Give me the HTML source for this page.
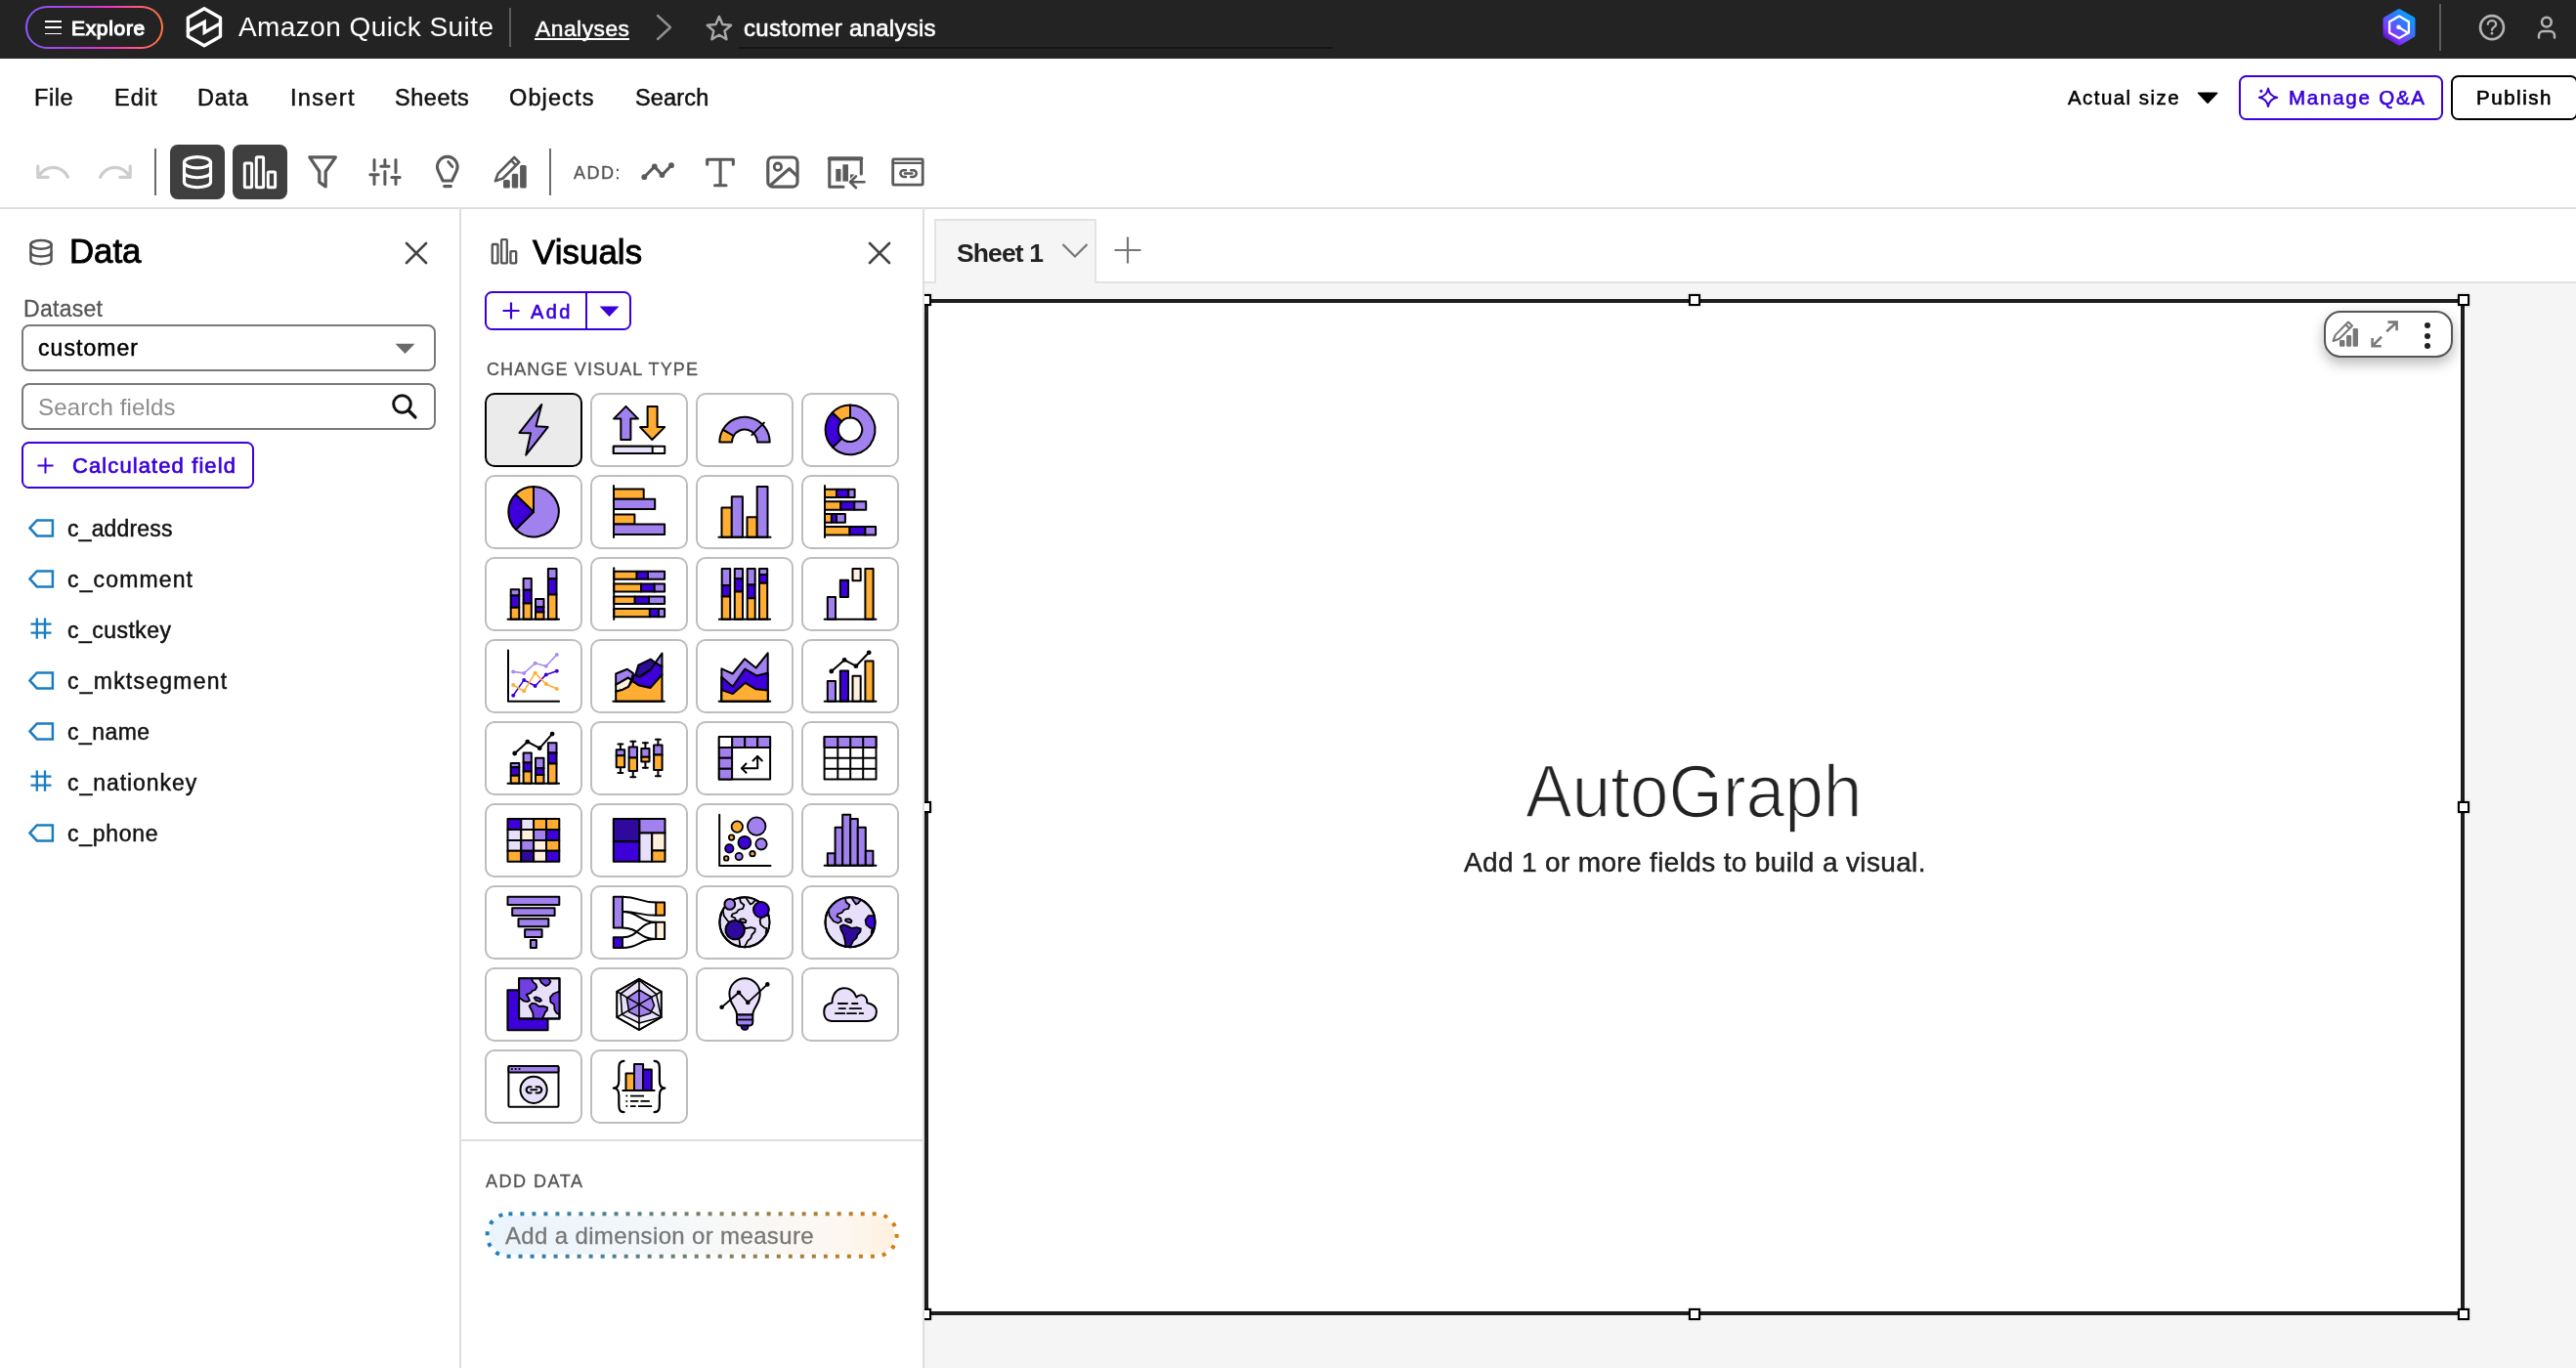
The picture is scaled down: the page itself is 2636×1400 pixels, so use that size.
<!DOCTYPE html><html><head><meta charset="utf-8"><title>customer analysis</title><style>html,body{margin:0;padding:0;background:#fff}body{width:2636px;height:1400px;position:relative;overflow:hidden;font-family:"Liberation Sans",sans-serif}.t{position:absolute;white-space:pre;line-height:1;font-family:"Liberation Sans",sans-serif;will-change:transform}div{box-sizing:content-box}</style></head><body><div style="position:absolute;left:946px;top:214px;width:1690px;height:74px;background:#fff"></div><div style="position:absolute;left:946px;top:288px;width:1690px;height:2px;background:#e2e2e2"></div><div style="position:absolute;left:946px;top:290px;width:1690px;height:1110px;background:#f5f5f5"></div><div style="position:absolute;left:956px;top:224px;width:162px;height:64px;border:2px solid #e2e2e2;border-bottom:none;background:#f5f5f5"></div><span class="t" style="left:978.5px;top:245.5px;font-size:26.5px;font-weight:bold;color:#222;letter-spacing:-0.88px;">Sheet 1</span><svg style="position:absolute;left:1086px;top:248px;overflow:visible;" width="28" height="18" viewBox="0 0 28 18"><path d="M1.5 2 L14 14.5 L26.5 2" fill="none" stroke="#777" stroke-width="2.2"/></svg><svg style="position:absolute;left:1140px;top:242px;overflow:visible;" width="28" height="28" viewBox="0 0 28 28"><path d="M14 0.5 V27.5 M0.5 14 H27.5" stroke="#777" stroke-width="2.2"/></svg><div style="position:absolute;left:946px;top:306px;width:1568px;height:1032px;border:4px solid #1e1e1e;background:#fff"></div><div style="position:absolute;left:941px;top:301px;width:12px;height:12px;border:2.5px solid #000;background:#fff;box-sizing:border-box;box-shadow:0 0 2px rgba(0,0,0,.4)"></div><div style="position:absolute;left:941px;top:820px;width:12px;height:12px;border:2.5px solid #000;background:#fff;box-sizing:border-box;box-shadow:0 0 2px rgba(0,0,0,.4)"></div><div style="position:absolute;left:941px;top:1339px;width:12px;height:12px;border:2.5px solid #000;background:#fff;box-sizing:border-box;box-shadow:0 0 2px rgba(0,0,0,.4)"></div><div style="position:absolute;left:1728px;top:301px;width:12px;height:12px;border:2.5px solid #000;background:#fff;box-sizing:border-box;box-shadow:0 0 2px rgba(0,0,0,.4)"></div><div style="position:absolute;left:1728px;top:1339px;width:12px;height:12px;border:2.5px solid #000;background:#fff;box-sizing:border-box;box-shadow:0 0 2px rgba(0,0,0,.4)"></div><div style="position:absolute;left:2515px;top:301px;width:12px;height:12px;border:2.5px solid #000;background:#fff;box-sizing:border-box;box-shadow:0 0 2px rgba(0,0,0,.4)"></div><div style="position:absolute;left:2515px;top:820px;width:12px;height:12px;border:2.5px solid #000;background:#fff;box-sizing:border-box;box-shadow:0 0 2px rgba(0,0,0,.4)"></div><div style="position:absolute;left:2515px;top:1339px;width:12px;height:12px;border:2.5px solid #000;background:#fff;box-sizing:border-box;box-shadow:0 0 2px rgba(0,0,0,.4)"></div><div style="position:absolute;left:2378px;top:318px;width:128px;height:43.5px;border:2px solid #555;border-radius:17px;background:#fff;box-shadow:0 6px 14px rgba(0,0,0,.28)"></div><svg style="position:absolute;left:2386px;top:328px;overflow:visible;" width="28" height="28" viewBox="3 3 35 35"><g fill="#777" stroke="none"><rect x="13" y="28.1" width="6.8" height="8.4" rx="1.6"/><rect x="21.8" y="21.8" width="6.4" height="14.7" rx="1.6"/><rect x="30.1" y="13" width="6.6" height="23.5" rx="1.6"/></g><path d="M4.9 29.2 L7.7 21.6 L24.2 5 L29.2 10 L12.7 26.5 Z M21 8.2 L26 13.2" fill="none" stroke="#777" stroke-width="2.6" stroke-linejoin="round"/></svg><svg style="position:absolute;left:2426px;top:328px;overflow:visible;" width="28" height="28" viewBox="0 0 28 28"><g fill="none" stroke="#7a7a7a" stroke-width="2.6" stroke-linecap="butt"><path d="M16.2 11.3 L26 2.2 M17.5 1.6 H26.6 V10.2"/><path d="M11 16.6 L2.2 25.7 M1.6 17.9 V26.3 H10.7"/></g></svg><div style="position:absolute;left:2481px;top:330.3px;width:6px;height:6px;background:#222;border-radius:50%"></div><div style="position:absolute;left:2481px;top:340.9px;width:6px;height:6px;background:#222;border-radius:50%"></div><div style="position:absolute;left:2481px;top:351.4px;width:6px;height:6px;background:#222;border-radius:50%"></div><span class="t" style="left:1561.0px;top:771.6px;font-size:76px;font-weight:normal;color:#222;letter-spacing:0.00px;-webkit-text-stroke:1.7px #fff;transform:scaleX(0.9372);transform-origin:0 0;">AutoGraph</span><span class="t" style="left:1498.0px;top:868.8px;font-size:28px;font-weight:normal;color:#222;letter-spacing:0.35px;-webkit-text-stroke:0.45px #222;">Add 1 or more fields to build a visual.</span><div style="position:absolute;left:470px;top:214px;width:2px;height:1186px;background:#dedede"></div><svg style="position:absolute;left:22px;top:238px;overflow:visible;transform:scale(0.78);transform-origin:50% 50%" width="40" height="40" viewBox="0 0 40 40"><g fill="none" stroke="#555" stroke-width="3.2" stroke-linecap="round"><ellipse cx="20" cy="10.2" rx="13.5" ry="5.6"/><path d="M6.5 10.2 V30.2 C6.5 37.6 33.5 37.6 33.5 30.2 V10.2"/><path d="M6.5 20.2 C6.5 27.6 33.5 27.6 33.5 20.2"/></g></svg><span class="t" style="left:70.5px;top:240.4px;font-size:34.8px;font-weight:normal;color:#000;letter-spacing:-0.01px;-webkit-text-stroke:0.9px #000;">Data</span><svg style="position:absolute;left:414px;top:247px;overflow:visible;" width="24" height="24" viewBox="0 0 24 24"><path d="M2 2 L22 22 M22 2 L2 22" stroke="#444" stroke-width="2.6" stroke-linecap="round"/></svg><span class="t" style="left:23.5px;top:304.9px;font-size:23px;font-weight:normal;color:#555;letter-spacing:0.29px;-webkit-text-stroke:0.3px #555;">Dataset</span><div style="position:absolute;left:22px;top:332px;width:420px;height:44px;border:2px solid #7a7a7a;border-radius:8px"></div><span class="t" style="left:39.0px;top:344.6px;font-size:23px;font-weight:normal;color:#000;letter-spacing:1.06px;-webkit-text-stroke:0.5px #000;">customer</span><svg style="position:absolute;left:404px;top:351px;overflow:visible;" width="21" height="12" viewBox="0 0 21 12"><path d="M0.5 0.8 L20.5 0.8 L10.5 11 Z" fill="#6a6a6a"/></svg><div style="position:absolute;left:22px;top:392px;width:420px;height:44px;border:2px solid #7a7a7a;border-radius:8px"></div><span class="t" style="left:39.0px;top:405.4px;font-size:24px;font-weight:normal;color:#8c8c8c;letter-spacing:0.15px;">Search fields</span><svg style="position:absolute;left:400px;top:402px;overflow:visible;" width="28" height="28" viewBox="0 0 28 28"><circle cx="11.5" cy="11.5" r="8.8" fill="none" stroke="#111" stroke-width="3"/><path d="M18 18 L25 25" stroke="#111" stroke-width="3.2" stroke-linecap="round"/></svg><div style="position:absolute;left:22px;top:452px;width:234px;height:44px;border:2px solid #3b00d9;border-radius:7.5px"></div><svg style="position:absolute;left:38px;top:468px;overflow:visible;" width="17" height="17" viewBox="0 0 17 17"><path d="M8.5 0.5 V16.5 M0.5 8.5 H16.5" stroke="#3b00d9" stroke-width="2"/></svg><span class="t" style="left:73.5px;top:465.8px;font-size:22px;font-weight:normal;color:#3b00d9;letter-spacing:1.10px;-webkit-text-stroke:0.7px #3b00d9;">Calculated field</span><svg style="position:absolute;left:28px;top:530.2px;overflow:visible;" width="28" height="20" viewBox="0 0 28 20"><path d="M2.5 10.4 L9.8 2.4 H25.9 V18.4 H9.8 Z" fill="none" stroke="#1b7dc0" stroke-width="2.5" stroke-linejoin="miter"/></svg><span class="t" style="left:68.8px;top:529.5px;font-size:23px;font-weight:normal;color:#111;letter-spacing:0.17px;-webkit-text-stroke:0.45px #111;">c_address</span><svg style="position:absolute;left:28px;top:582.2px;overflow:visible;" width="28" height="20" viewBox="0 0 28 20"><path d="M2.5 10.4 L9.8 2.4 H25.9 V18.4 H9.8 Z" fill="none" stroke="#1b7dc0" stroke-width="2.5" stroke-linejoin="miter"/></svg><span class="t" style="left:68.8px;top:581.5px;font-size:23px;font-weight:normal;color:#111;letter-spacing:1.14px;-webkit-text-stroke:0.45px #111;">c_comment</span><svg style="position:absolute;left:30px;top:630.2px;overflow:visible;" width="24" height="24" viewBox="0 0 24 24"><path d="M7.8 2.5 V23.8 M16 2.5 V23.8 M1.5 8.7 H22.5 M1.5 17.7 H22.5" fill="none" stroke="#1b7dc0" stroke-width="2.3"/></svg><span class="t" style="left:68.8px;top:633.5px;font-size:23px;font-weight:normal;color:#111;letter-spacing:0.48px;-webkit-text-stroke:0.45px #111;">c_custkey</span><svg style="position:absolute;left:28px;top:686.2px;overflow:visible;" width="28" height="20" viewBox="0 0 28 20"><path d="M2.5 10.4 L9.8 2.4 H25.9 V18.4 H9.8 Z" fill="none" stroke="#1b7dc0" stroke-width="2.5" stroke-linejoin="miter"/></svg><span class="t" style="left:68.8px;top:685.5px;font-size:23px;font-weight:normal;color:#111;letter-spacing:1.23px;-webkit-text-stroke:0.45px #111;">c_mktsegment</span><svg style="position:absolute;left:28px;top:738.2px;overflow:visible;" width="28" height="20" viewBox="0 0 28 20"><path d="M2.5 10.4 L9.8 2.4 H25.9 V18.4 H9.8 Z" fill="none" stroke="#1b7dc0" stroke-width="2.5" stroke-linejoin="miter"/></svg><span class="t" style="left:68.8px;top:737.5px;font-size:23px;font-weight:normal;color:#111;letter-spacing:0.45px;-webkit-text-stroke:0.45px #111;">c_name</span><svg style="position:absolute;left:30px;top:786.2px;overflow:visible;" width="24" height="24" viewBox="0 0 24 24"><path d="M7.8 2.5 V23.8 M16 2.5 V23.8 M1.5 8.7 H22.5 M1.5 17.7 H22.5" fill="none" stroke="#1b7dc0" stroke-width="2.3"/></svg><span class="t" style="left:68.8px;top:789.5px;font-size:23px;font-weight:normal;color:#111;letter-spacing:0.94px;-webkit-text-stroke:0.45px #111;">c_nationkey</span><svg style="position:absolute;left:28px;top:842.2px;overflow:visible;" width="28" height="20" viewBox="0 0 28 20"><path d="M2.5 10.4 L9.8 2.4 H25.9 V18.4 H9.8 Z" fill="none" stroke="#1b7dc0" stroke-width="2.5" stroke-linejoin="miter"/></svg><span class="t" style="left:68.8px;top:841.5px;font-size:23px;font-weight:normal;color:#111;letter-spacing:0.73px;-webkit-text-stroke:0.45px #111;">c_phone</span><div style="position:absolute;left:472px;top:214px;width:472px;height:1186px;background:#fff"></div><div style="position:absolute;left:944px;top:214px;width:2px;height:1186px;background:#dedede"></div><svg style="position:absolute;left:495.6px;top:237.4px;overflow:visible;transform:scale(0.78);transform-origin:50% 50%" width="40" height="40" viewBox="0 0 40 40"><g fill="none" stroke="#555" stroke-width="3" stroke-linejoin="round"><rect x="4.3" y="11" width="7.3" height="24.8" rx="1"/><rect x="16.3" y="4.8" width="7.3" height="31" rx="1"/><rect x="28.3" y="20.1" width="7.3" height="15.7" rx="1"/></g></svg><span class="t" style="left:544.5px;top:240.7px;font-size:34.8px;font-weight:normal;color:#000;letter-spacing:0.08px;-webkit-text-stroke:0.9px #000;">Visuals</span><svg style="position:absolute;left:888px;top:247px;overflow:visible;" width="24" height="24" viewBox="0 0 24 24"><path d="M2 2 L22 22 M22 2 L2 22" stroke="#444" stroke-width="2.6" stroke-linecap="round"/></svg><div style="position:absolute;left:496px;top:298px;width:146px;height:36px;border:2px solid #3b00d9;border-radius:7.5px"></div><div style="position:absolute;left:598.5px;top:299px;width:2px;height:38px;background:#3b00d9"></div><svg style="position:absolute;left:514px;top:309px;overflow:visible;" width="18" height="18" viewBox="0 0 18 18"><path d="M9 0.5 V17.5 M0.5 9 H17.5" stroke="#3b00d9" stroke-width="2.2"/></svg><span class="t" style="left:542.5px;top:309.0px;font-size:20px;font-weight:normal;color:#3b00d9;letter-spacing:2.45px;-webkit-text-stroke:0.6px #3b00d9;">Add</span><svg style="position:absolute;left:612.5px;top:312.5px;overflow:visible;" width="21" height="12" viewBox="0 0 21 12"><path d="M0.5 0.5 L20.5 0.5 L10.5 11 Z" fill="#3b00d9"/></svg><span class="t" style="left:497.5px;top:368.9px;font-size:18px;font-weight:normal;color:#555;letter-spacing:1.11px;-webkit-text-stroke:0.35px #555;">CHANGE VISUAL TYPE</span><div style="position:absolute;left:496px;top:402px;width:96px;height:72px;border:2px solid #000;border-radius:10px;background:#ebebeb"></div><svg style="position:absolute;left:518px;top:412px;overflow:visible;" width="56" height="56" viewBox="0 0 56 56"><path d="M36.3 1.9 L13.5 30.9 L25.1 31.3 L20.2 53.7 L42.6 25.1 L30.5 24.2 Z" fill="#9a7ae9" stroke="#000" stroke-width="2" stroke-linejoin="round" stroke-linecap="round" /></svg><div style="position:absolute;left:604px;top:402px;width:96px;height:72px;border:2px solid #bdbdbd;border-radius:10px;background:#fff"></div><svg style="position:absolute;left:626px;top:412px;overflow:visible;" width="56" height="56" viewBox="0 0 56 56"><path d="M14.5 3.9 L27.0 16.6 L19.4 16.6 L19.4 37.9 L9.3 37.9 L9.3 16.6 L2.0 16.6 Z" fill="#a081ee" stroke="#000" stroke-width="2" stroke-linejoin="round" stroke-linecap="round" /><path d="M36.6 4.1 L46.6 4.1 L46.6 25.1 L54.2 25.1 L41.3 38.0 L29.0 25.1 L36.6 25.1 Z" fill="#ffad33" stroke="#000" stroke-width="2" stroke-linejoin="round" stroke-linecap="round" /><rect x="1.8" y="44.7" width="52.4" height="7.2" fill="#fff" stroke="#000" stroke-width="2" rx="0" stroke-linejoin="round"/><rect x="1.8" y="44.7" width="39.9" height="7.2" fill="#e8e0fb" stroke="#000" stroke-width="2" rx="0" stroke-linejoin="round"/></svg><div style="position:absolute;left:712px;top:402px;width:96px;height:72px;border:2px solid #bdbdbd;border-radius:10px;background:#fff"></div><svg style="position:absolute;left:734px;top:412px;overflow:visible;" width="56" height="56" viewBox="0 0 56 56"><path d="M2.30 40.50 A25.70 25.70 0 0 1 5.74 27.65 L16.74 34.00 A13.00 13.00 0 0 0 15.00 40.50 Z" fill="#ffad33" stroke="#000" stroke-width="2" stroke-linejoin="round"/><path d="M5.74 27.65 A25.70 25.70 0 0 1 53.70 40.50 L41.00 40.50 A13.00 13.00 0 0 0 16.74 34.00 Z" fill="#a081ee" stroke="#000" stroke-width="2" stroke-linejoin="round"/><path d="M35.4 33.1 L47.9 20.6" stroke="#000" stroke-width="2" stroke-linecap="round" fill="none"/></svg><div style="position:absolute;left:820px;top:402px;width:96px;height:72px;border:2px solid #bdbdbd;border-radius:10px;background:#fff"></div><svg style="position:absolute;left:842px;top:412px;overflow:visible;" width="56" height="56" viewBox="0 0 56 56"><path d="M28.00 2.40 A25.40 25.40 0 1 1 10.04 45.76 L19.37 36.43 A12.20 12.20 0 1 0 28.00 15.60 Z" fill="#a081ee" stroke="#000" stroke-width="2" stroke-linejoin="round"/><path d="M10.04 45.76 A25.40 25.40 0 0 1 9.73 10.16 L19.22 19.33 A12.20 12.20 0 0 0 19.37 36.43 Z" fill="#3d00d8" stroke="#000" stroke-width="2" stroke-linejoin="round"/><path d="M9.73 10.16 A25.40 25.40 0 0 1 28.00 2.40 L28.00 15.60 A12.20 12.20 0 0 0 19.22 19.33 Z" fill="#ffad33" stroke="#000" stroke-width="2" stroke-linejoin="round"/></svg><div style="position:absolute;left:496px;top:486px;width:96px;height:72px;border:2px solid #bdbdbd;border-radius:10px;background:#fff"></div><svg style="position:absolute;left:518px;top:496px;overflow:visible;" width="56" height="56" viewBox="0 0 56 56"><path d="M28.00 27.70 L28.00 2.00 A25.70 25.70 0 1 1 9.83 45.87 Z" fill="#a081ee" stroke="#000" stroke-width="2" stroke-linejoin="round"/><path d="M28.00 27.70 L9.83 45.87 A25.70 25.70 0 0 1 9.51 9.85 Z" fill="#3d00d8" stroke="#000" stroke-width="2" stroke-linejoin="round"/><path d="M28.00 27.70 L9.51 9.85 A25.70 25.70 0 0 1 28.00 2.00 Z" fill="#ffad33" stroke="#000" stroke-width="2" stroke-linejoin="round"/></svg><div style="position:absolute;left:604px;top:486px;width:96px;height:72px;border:2px solid #bdbdbd;border-radius:10px;background:#fff"></div><svg style="position:absolute;left:626px;top:496px;overflow:visible;" width="56" height="56" viewBox="0 0 56 56"><rect x="2.0" y="4.5" width="30.7" height="10.2" fill="#ffad33" stroke="#000" stroke-width="2" rx="0" stroke-linejoin="round"/><rect x="2.0" y="14.7" width="42.2" height="10.3" fill="#a081ee" stroke="#000" stroke-width="2" rx="0" stroke-linejoin="round"/><rect x="2.0" y="30.5" width="21.4" height="9.9" fill="#ffad33" stroke="#000" stroke-width="2" rx="0" stroke-linejoin="round"/><rect x="2.0" y="40.4" width="52.1" height="10.6" fill="#a081ee" stroke="#000" stroke-width="2" rx="0" stroke-linejoin="round"/><path d="M2.0 1.0 L2.0 54.0" stroke="#000" stroke-width="2" stroke-linecap="round" fill="none"/></svg><div style="position:absolute;left:712px;top:486px;width:96px;height:72px;border:2px solid #bdbdbd;border-radius:10px;background:#fff"></div><svg style="position:absolute;left:734px;top:496px;overflow:visible;" width="56" height="56" viewBox="0 0 56 56"><rect x="4.5" y="23.6" width="10.3" height="30.1" fill="#ffad33" stroke="#000" stroke-width="2" rx="0" stroke-linejoin="round"/><rect x="14.8" y="12.2" width="11.1" height="41.5" fill="#a081ee" stroke="#000" stroke-width="2" rx="0" stroke-linejoin="round"/><rect x="30.5" y="33.2" width="10.2" height="20.5" fill="#ffad33" stroke="#000" stroke-width="2" rx="0" stroke-linejoin="round"/><rect x="40.7" y="1.9" width="10.8" height="51.8" fill="#a081ee" stroke="#000" stroke-width="2" rx="0" stroke-linejoin="round"/><path d="M1.4 53.7 L54.5 53.7" stroke="#000" stroke-width="2" stroke-linecap="round" fill="none"/></svg><div style="position:absolute;left:820px;top:486px;width:96px;height:72px;border:2px solid #bdbdbd;border-radius:10px;background:#fff"></div><svg style="position:absolute;left:842px;top:496px;overflow:visible;" width="56" height="56" viewBox="0 0 56 56"><rect x="2.0" y="4.8" width="12.0" height="8.2" fill="#ffad33" stroke="#000" stroke-width="2" rx="0" stroke-linejoin="round"/><rect x="14.0" y="4.8" width="12.3" height="8.2" fill="#3d00d8" stroke="#000" stroke-width="2" rx="0" stroke-linejoin="round"/><rect x="26.3" y="4.8" width="6.3" height="8.2" fill="#a081ee" stroke="#000" stroke-width="2" rx="0" stroke-linejoin="round"/><rect x="2.0" y="17.3" width="16.3" height="8.5" fill="#ffad33" stroke="#000" stroke-width="2" rx="0" stroke-linejoin="round"/><rect x="18.3" y="17.3" width="14.0" height="8.5" fill="#3d00d8" stroke="#000" stroke-width="2" rx="0" stroke-linejoin="round"/><rect x="32.3" y="17.3" width="11.9" height="8.5" fill="#a081ee" stroke="#000" stroke-width="2" rx="0" stroke-linejoin="round"/><rect x="2.0" y="30.1" width="6.9" height="8.6" fill="#ffad33" stroke="#000" stroke-width="2" rx="0" stroke-linejoin="round"/><rect x="8.9" y="30.1" width="5.1" height="8.6" fill="#3d00d8" stroke="#000" stroke-width="2" rx="0" stroke-linejoin="round"/><rect x="14.0" y="30.1" width="8.9" height="8.6" fill="#a081ee" stroke="#000" stroke-width="2" rx="0" stroke-linejoin="round"/><rect x="2.0" y="42.9" width="25.5" height="8.6" fill="#ffad33" stroke="#000" stroke-width="2" rx="0" stroke-linejoin="round"/><rect x="27.5" y="42.9" width="15.9" height="8.6" fill="#3d00d8" stroke="#000" stroke-width="2" rx="0" stroke-linejoin="round"/><rect x="43.4" y="42.9" width="10.7" height="8.6" fill="#a081ee" stroke="#000" stroke-width="2" rx="0" stroke-linejoin="round"/><path d="M2.0 1.0 L2.0 54.0" stroke="#000" stroke-width="2" stroke-linecap="round" fill="none"/></svg><div style="position:absolute;left:496px;top:570px;width:96px;height:72px;border:2px solid #bdbdbd;border-radius:10px;background:#fff"></div><svg style="position:absolute;left:518px;top:580px;overflow:visible;" width="56" height="56" viewBox="0 0 56 56"><rect x="4.7" y="23.3" width="8.6" height="6.1" fill="#a081ee" stroke="#000" stroke-width="2" rx="0" stroke-linejoin="round"/><rect x="4.7" y="29.4" width="8.6" height="12.4" fill="#3d00d8" stroke="#000" stroke-width="2" rx="0" stroke-linejoin="round"/><rect x="4.7" y="41.8" width="8.6" height="12.0" fill="#ffad33" stroke="#000" stroke-width="2" rx="0" stroke-linejoin="round"/><rect x="17.6" y="11.9" width="8.2" height="11.8" fill="#a081ee" stroke="#000" stroke-width="2" rx="0" stroke-linejoin="round"/><rect x="17.6" y="23.7" width="8.2" height="13.7" fill="#3d00d8" stroke="#000" stroke-width="2" rx="0" stroke-linejoin="round"/><rect x="17.6" y="37.4" width="8.2" height="16.4" fill="#ffad33" stroke="#000" stroke-width="2" rx="0" stroke-linejoin="round"/><rect x="30.0" y="32.9" width="8.5" height="8.3" fill="#a081ee" stroke="#000" stroke-width="2" rx="0" stroke-linejoin="round"/><rect x="30.0" y="41.2" width="8.5" height="5.3" fill="#3d00d8" stroke="#000" stroke-width="2" rx="0" stroke-linejoin="round"/><rect x="30.0" y="46.5" width="8.5" height="7.3" fill="#ffad33" stroke="#000" stroke-width="2" rx="0" stroke-linejoin="round"/><rect x="42.9" y="1.9" width="8.6" height="10.4" fill="#a081ee" stroke="#000" stroke-width="2" rx="0" stroke-linejoin="round"/><rect x="42.9" y="12.3" width="8.6" height="16.2" fill="#3d00d8" stroke="#000" stroke-width="2" rx="0" stroke-linejoin="round"/><rect x="42.9" y="28.5" width="8.6" height="25.3" fill="#ffad33" stroke="#000" stroke-width="2" rx="0" stroke-linejoin="round"/><path d="M1.5 53.8 L54.1 53.8" stroke="#000" stroke-width="2" stroke-linecap="round" fill="none"/></svg><div style="position:absolute;left:604px;top:570px;width:96px;height:72px;border:2px solid #bdbdbd;border-radius:10px;background:#fff"></div><svg style="position:absolute;left:626px;top:580px;overflow:visible;" width="56" height="56" viewBox="0 0 56 56"><rect x="2.2" y="4.7" width="23.4" height="8.0" fill="#ffad33" stroke="#000" stroke-width="2" rx="0" stroke-linejoin="round"/><rect x="25.6" y="4.7" width="11.4" height="8.0" fill="#3d00d8" stroke="#000" stroke-width="2" rx="0" stroke-linejoin="round"/><rect x="37.0" y="4.7" width="17.1" height="8.0" fill="#a081ee" stroke="#000" stroke-width="2" rx="0" stroke-linejoin="round"/><rect x="2.2" y="17.5" width="27.8" height="8.1" fill="#ffad33" stroke="#000" stroke-width="2" rx="0" stroke-linejoin="round"/><rect x="30.0" y="17.5" width="13.7" height="8.1" fill="#3d00d8" stroke="#000" stroke-width="2" rx="0" stroke-linejoin="round"/><rect x="43.7" y="17.5" width="10.4" height="8.1" fill="#a081ee" stroke="#000" stroke-width="2" rx="0" stroke-linejoin="round"/><rect x="2.2" y="30.4" width="21.5" height="7.6" fill="#ffad33" stroke="#000" stroke-width="2" rx="0" stroke-linejoin="round"/><rect x="23.7" y="30.4" width="14.3" height="7.6" fill="#3d00d8" stroke="#000" stroke-width="2" rx="0" stroke-linejoin="round"/><rect x="38.0" y="30.4" width="16.1" height="7.6" fill="#a081ee" stroke="#000" stroke-width="2" rx="0" stroke-linejoin="round"/><rect x="2.2" y="43.1" width="36.7" height="8.2" fill="#ffad33" stroke="#000" stroke-width="2" rx="0" stroke-linejoin="round"/><rect x="38.9" y="43.1" width="9.1" height="8.2" fill="#3d00d8" stroke="#000" stroke-width="2" rx="0" stroke-linejoin="round"/><rect x="48.0" y="43.1" width="6.1" height="8.2" fill="#a081ee" stroke="#000" stroke-width="2" rx="0" stroke-linejoin="round"/><path d="M2.2 1.3 L2.2 54.1" stroke="#000" stroke-width="2" stroke-linecap="round" fill="none"/></svg><div style="position:absolute;left:712px;top:570px;width:96px;height:72px;border:2px solid #bdbdbd;border-radius:10px;background:#fff"></div><svg style="position:absolute;left:734px;top:580px;overflow:visible;" width="56" height="56" viewBox="0 0 56 56"><rect x="4.7" y="1.9" width="8.5" height="17.1" fill="#a081ee" stroke="#000" stroke-width="2" rx="0" stroke-linejoin="round"/><rect x="4.7" y="19.0" width="8.5" height="11.4" fill="#3d00d8" stroke="#000" stroke-width="2" rx="0" stroke-linejoin="round"/><rect x="4.7" y="30.4" width="8.5" height="23.4" fill="#ffad33" stroke="#000" stroke-width="2" rx="0" stroke-linejoin="round"/><rect x="17.8" y="1.9" width="8.2" height="10.4" fill="#a081ee" stroke="#000" stroke-width="2" rx="0" stroke-linejoin="round"/><rect x="17.8" y="12.3" width="8.2" height="13.3" fill="#3d00d8" stroke="#000" stroke-width="2" rx="0" stroke-linejoin="round"/><rect x="17.8" y="25.6" width="8.2" height="28.2" fill="#ffad33" stroke="#000" stroke-width="2" rx="0" stroke-linejoin="round"/><rect x="30.7" y="1.9" width="8.0" height="16.5" fill="#a081ee" stroke="#000" stroke-width="2" rx="0" stroke-linejoin="round"/><rect x="30.7" y="18.4" width="8.0" height="13.9" fill="#3d00d8" stroke="#000" stroke-width="2" rx="0" stroke-linejoin="round"/><rect x="30.7" y="32.3" width="8.0" height="21.5" fill="#ffad33" stroke="#000" stroke-width="2" rx="0" stroke-linejoin="round"/><rect x="43.0" y="1.9" width="8.2" height="6.2" fill="#a081ee" stroke="#000" stroke-width="2" rx="0" stroke-linejoin="round"/><rect x="43.0" y="8.1" width="8.2" height="8.6" fill="#3d00d8" stroke="#000" stroke-width="2" rx="0" stroke-linejoin="round"/><rect x="43.0" y="16.7" width="8.2" height="37.1" fill="#ffad33" stroke="#000" stroke-width="2" rx="0" stroke-linejoin="round"/><path d="M1.8 53.8 L54.1 53.8" stroke="#000" stroke-width="2" stroke-linecap="round" fill="none"/></svg><div style="position:absolute;left:820px;top:570px;width:96px;height:72px;border:2px solid #bdbdbd;border-radius:10px;background:#fff"></div><svg style="position:absolute;left:842px;top:580px;overflow:visible;" width="56" height="56" viewBox="0 0 56 56"><rect x="4.8" y="31.0" width="8.2" height="22.8" fill="#a081ee" stroke="#000" stroke-width="2" rx="0" stroke-linejoin="round"/><rect x="17.8" y="13.8" width="8.2" height="17.2" fill="#3d00d8" stroke="#000" stroke-width="2" rx="0" stroke-linejoin="round"/><rect x="30.5" y="1.9" width="8.2" height="12.3" fill="#fff0de" stroke="#000" stroke-width="2" rx="0" stroke-linejoin="round"/><rect x="43.4" y="1.9" width="8.2" height="51.9" fill="#ffad33" stroke="#000" stroke-width="2" rx="0" stroke-linejoin="round"/><path d="M1.6 53.8 L54.5 53.8" stroke="#000" stroke-width="2" stroke-linecap="round" fill="none"/></svg><div style="position:absolute;left:496px;top:654px;width:96px;height:72px;border:2px solid #bdbdbd;border-radius:10px;background:#fff"></div><svg style="position:absolute;left:518px;top:664px;overflow:visible;" width="56" height="56" viewBox="0 0 56 56"><path d="M7.2 23.4 L18.2 24.9 L29.6 14.8 L40.8 17.7 L51.8 5.9" fill="none" stroke="#a98df0" stroke-width="1.6" stroke-linejoin="round" stroke-linecap="round" /><circle cx="7.2" cy="23.4" r="2.0" fill="#a98df0"/><circle cx="18.2" cy="24.9" r="2.0" fill="#a98df0"/><circle cx="29.6" cy="14.8" r="2.0" fill="#a98df0"/><circle cx="40.8" cy="17.7" r="2.0" fill="#a98df0"/><circle cx="51.8" cy="5.9" r="2.0" fill="#a98df0"/><path d="M7.2 47.7 L18.2 31.9 L29.6 38.0 L40.8 26.4 L51.8 22.8" fill="none" stroke="#3d00d8" stroke-width="1.6" stroke-linejoin="round" stroke-linecap="round" /><circle cx="7.2" cy="47.7" r="2.0" fill="#3d00d8"/><circle cx="18.2" cy="31.9" r="2.0" fill="#3d00d8"/><circle cx="29.6" cy="38.0" r="2.0" fill="#3d00d8"/><circle cx="40.8" cy="26.4" r="2.0" fill="#3d00d8"/><circle cx="51.8" cy="22.8" r="2.0" fill="#3d00d8"/><path d="M7.2 37.1 L18.2 43.3 L29.6 24.7 L40.8 36.1 L51.8 40.9" fill="none" stroke="#ffad33" stroke-width="1.6" stroke-linejoin="round" stroke-linecap="round" /><circle cx="7.2" cy="37.1" r="2.0" fill="#ffad33"/><circle cx="18.2" cy="43.3" r="2.0" fill="#ffad33"/><circle cx="29.6" cy="24.7" r="2.0" fill="#ffad33"/><circle cx="40.8" cy="36.1" r="2.0" fill="#ffad33"/><circle cx="51.8" cy="40.9" r="2.0" fill="#ffad33"/><path d="M2.0 1.5 L2.0 53.8 L54.1 53.8" fill="none" stroke="#000" stroke-width="2" stroke-linejoin="round" stroke-linecap="round" /></svg><div style="position:absolute;left:604px;top:654px;width:96px;height:72px;border:2px solid #bdbdbd;border-radius:10px;background:#fff"></div><svg style="position:absolute;left:626px;top:664px;overflow:visible;" width="56" height="56" viewBox="0 0 56 56"><path d="M4.2 25.5 L15.9 20.7 L22.0 25.1 L20.0 32.0 L16.8 29.6 L4.2 36.8 Z" fill="#a081ee" stroke="#000" stroke-width="2" stroke-linejoin="round" stroke-linecap="round" /><path d="M4.2 36.8 L16.8 29.6 L20.0 32.0 L17.2 38.8 L11.5 41.7 L4.2 43.7 Z" fill="#fff0de" stroke="#000" stroke-width="2" stroke-linejoin="round" stroke-linecap="round" /><path d="M20.8 32.8 L22.4 28.0 L24.4 26.3 L28.1 28.8 L39.8 21.1 L44.6 14.2 L51.5 18.3 L51.5 26.3 L39.4 40.1 L28.1 37.6 Z" fill="#3d00d8" stroke="#000" stroke-width="2" stroke-linejoin="round" stroke-linecap="round" /><path d="M24.4 26.3 L27.3 16.6 L39.8 10.6 L44.6 14.2 L39.8 21.1 L28.1 28.8 Z" fill="#2e0a9c" stroke="#000" stroke-width="2" stroke-linejoin="round" stroke-linecap="round" /><path d="M44.6 14.2 L51.5 4.5 L51.5 18.3 Z" fill="#a081ee" stroke="#000" stroke-width="2" stroke-linejoin="round" stroke-linecap="round" /><path d="M4.2 43.7 L11.5 41.7 L17.2 38.8 L20.8 32.8 L28.1 37.6 L39.4 40.1 L51.5 26.3 L51.5 53.8 L4.2 53.8 Z" fill="#ffad33" stroke="#000" stroke-width="2" stroke-linejoin="round" stroke-linecap="round" /><path d="M1.4 53.8 L53.9 53.8" stroke="#000" stroke-width="2" stroke-linecap="round" fill="none"/></svg><div style="position:absolute;left:712px;top:654px;width:96px;height:72px;border:2px solid #bdbdbd;border-radius:10px;background:#fff"></div><svg style="position:absolute;left:734px;top:664px;overflow:visible;" width="56" height="56" viewBox="0 0 56 56"><path d="M4.4 20.3 L15.7 25.5 L28.1 10.2 L39.6 19.5 L51.7 4.4 L51.7 53.8 L4.4 53.8 Z" fill="#a081ee" stroke="#000" stroke-width="2" stroke-linejoin="round" stroke-linecap="round" /><path d="M4.4 28.8 L15.7 38.8 L28.3 20.5 L40.4 27.5 L51.7 24.7 L51.7 53.8 L4.4 53.8 Z" fill="#3d00d8" stroke="#000" stroke-width="2" stroke-linejoin="round" stroke-linecap="round" /><path d="M4.4 42.1 L15.9 46.1 L28.6 34.8 L39.6 41.3 L51.7 42.5 L51.7 53.8 L4.4 53.8 Z" fill="#ffad33" stroke="#000" stroke-width="2" stroke-linejoin="round" stroke-linecap="round" /><path d="M1.6 53.8 L54.3 53.8" stroke="#000" stroke-width="2" stroke-linecap="round" fill="none"/></svg><div style="position:absolute;left:820px;top:654px;width:96px;height:72px;border:2px solid #bdbdbd;border-radius:10px;background:#fff"></div><svg style="position:absolute;left:842px;top:664px;overflow:visible;" width="56" height="56" viewBox="0 0 56 56"><rect x="4.8" y="32.9" width="8.2" height="20.9" fill="#a081ee" stroke="#000" stroke-width="2" rx="0" stroke-linejoin="round"/><rect x="17.8" y="22.4" width="8.2" height="31.4" fill="#3d00d8" stroke="#000" stroke-width="2" rx="0" stroke-linejoin="round"/><rect x="30.5" y="27.7" width="8.2" height="26.1" fill="#fff0de" stroke="#000" stroke-width="2" rx="0" stroke-linejoin="round"/><rect x="43.4" y="12.5" width="8.2" height="41.3" fill="#ffad33" stroke="#000" stroke-width="2" rx="0" stroke-linejoin="round"/><path d="M1.6 53.8 L54.5 53.8" stroke="#000" stroke-width="2" stroke-linecap="round" fill="none"/><path d="M8.8 23.0 L22.1 11.4 L33.9 17.7 L47.2 3.8" fill="none" stroke="#000" stroke-width="2" stroke-linejoin="round" stroke-linecap="round" /><circle cx="8.8" cy="23.0" r="2.4" fill="#000"/><circle cx="22.1" cy="11.4" r="2.4" fill="#000"/><circle cx="33.9" cy="17.7" r="2.4" fill="#000"/><circle cx="47.2" cy="3.8" r="2.4" fill="#000"/></svg><div style="position:absolute;left:496px;top:738px;width:96px;height:72px;border:2px solid #bdbdbd;border-radius:10px;background:#fff"></div><svg style="position:absolute;left:518px;top:748px;overflow:visible;" width="56" height="56" viewBox="0 0 56 56"><rect x="4.7" y="32.9" width="8.6" height="4.4" fill="#a081ee" stroke="#000" stroke-width="2" rx="0" stroke-linejoin="round"/><rect x="4.7" y="37.3" width="8.6" height="8.5" fill="#3d00d8" stroke="#000" stroke-width="2" rx="0" stroke-linejoin="round"/><rect x="4.7" y="45.8" width="8.6" height="8.0" fill="#ffad33" stroke="#000" stroke-width="2" rx="0" stroke-linejoin="round"/><rect x="17.6" y="22.5" width="8.2" height="10.0" fill="#a081ee" stroke="#000" stroke-width="2" rx="0" stroke-linejoin="round"/><rect x="17.6" y="32.5" width="8.2" height="9.0" fill="#3d00d8" stroke="#000" stroke-width="2" rx="0" stroke-linejoin="round"/><rect x="17.6" y="41.5" width="8.2" height="12.3" fill="#ffad33" stroke="#000" stroke-width="2" rx="0" stroke-linejoin="round"/><rect x="30.0" y="27.8" width="8.5" height="10.4" fill="#a081ee" stroke="#000" stroke-width="2" rx="0" stroke-linejoin="round"/><rect x="30.0" y="38.2" width="8.5" height="6.7" fill="#3d00d8" stroke="#000" stroke-width="2" rx="0" stroke-linejoin="round"/><rect x="30.0" y="44.9" width="8.5" height="8.9" fill="#ffad33" stroke="#000" stroke-width="2" rx="0" stroke-linejoin="round"/><rect x="42.9" y="12.2" width="8.6" height="10.3" fill="#a081ee" stroke="#000" stroke-width="2" rx="0" stroke-linejoin="round"/><rect x="42.9" y="22.5" width="8.6" height="11.0" fill="#3d00d8" stroke="#000" stroke-width="2" rx="0" stroke-linejoin="round"/><rect x="42.9" y="33.5" width="8.6" height="20.3" fill="#ffad33" stroke="#000" stroke-width="2" rx="0" stroke-linejoin="round"/><path d="M1.5 53.8 L54.1 53.8" stroke="#000" stroke-width="2" stroke-linecap="round" fill="none"/><path d="M8.7 23.0 L21.8 11.2 L34.2 17.7 L47.1 3.1" fill="none" stroke="#000" stroke-width="2" stroke-linejoin="round" stroke-linecap="round" /><circle cx="8.7" cy="23.0" r="2.4" fill="#000"/><circle cx="21.8" cy="11.2" r="2.4" fill="#000"/><circle cx="34.2" cy="17.7" r="2.4" fill="#000"/><circle cx="47.1" cy="3.1" r="2.4" fill="#000"/></svg><div style="position:absolute;left:604px;top:738px;width:96px;height:72px;border:2px solid #bdbdbd;border-radius:10px;background:#fff"></div><svg style="position:absolute;left:626px;top:748px;overflow:visible;" width="56" height="56" viewBox="0 0 56 56"><path d="M8.9 13.5 L8.9 43.0" stroke="#000" stroke-width="2" stroke-linecap="round" fill="none"/><path d="M6.4 13.5 L11.4 13.5" stroke="#000" stroke-width="2" stroke-linecap="round" fill="none"/><path d="M6.4 43.0 L11.4 43.0" stroke="#000" stroke-width="2" stroke-linecap="round" fill="none"/><rect x="4.7" y="19.2" width="8.5" height="6.1" fill="#a081ee" stroke="#000" stroke-width="2" rx="0" stroke-linejoin="round"/><rect x="4.7" y="25.3" width="8.5" height="12.0" fill="#ffad33" stroke="#000" stroke-width="2" rx="0" stroke-linejoin="round"/><path d="M21.8 10.7 L21.8 47.2" stroke="#000" stroke-width="2" stroke-linecap="round" fill="none"/><path d="M19.3 10.7 L24.3 10.7" stroke="#000" stroke-width="2" stroke-linecap="round" fill="none"/><path d="M19.3 47.2 L24.3 47.2" stroke="#000" stroke-width="2" stroke-linecap="round" fill="none"/><rect x="17.6" y="16.4" width="8.4" height="11.0" fill="#a081ee" stroke="#000" stroke-width="2" rx="0" stroke-linejoin="round"/><rect x="17.6" y="27.4" width="8.4" height="13.7" fill="#ffad33" stroke="#000" stroke-width="2" rx="0" stroke-linejoin="round"/><path d="M34.4 12.2 L34.4 37.7" stroke="#000" stroke-width="2" stroke-linecap="round" fill="none"/><path d="M31.9 12.2 L36.9 12.2" stroke="#000" stroke-width="2" stroke-linecap="round" fill="none"/><path d="M31.9 37.7 L36.9 37.7" stroke="#000" stroke-width="2" stroke-linecap="round" fill="none"/><rect x="30.3" y="17.9" width="8.2" height="8.9" fill="#a081ee" stroke="#000" stroke-width="2" rx="0" stroke-linejoin="round"/><rect x="30.3" y="26.8" width="8.2" height="4.8" fill="#ffad33" stroke="#000" stroke-width="2" rx="0" stroke-linejoin="round"/><path d="M47.4 8.8 L47.4 46.2" stroke="#000" stroke-width="2" stroke-linecap="round" fill="none"/><path d="M44.9 8.8 L49.9 8.8" stroke="#000" stroke-width="2" stroke-linecap="round" fill="none"/><path d="M44.9 46.2 L49.9 46.2" stroke="#000" stroke-width="2" stroke-linecap="round" fill="none"/><rect x="43.1" y="14.5" width="8.5" height="10.0" fill="#a081ee" stroke="#000" stroke-width="2" rx="0" stroke-linejoin="round"/><rect x="43.1" y="24.5" width="8.5" height="15.6" fill="#ffad33" stroke="#000" stroke-width="2" rx="0" stroke-linejoin="round"/></svg><div style="position:absolute;left:712px;top:738px;width:96px;height:72px;border:2px solid #bdbdbd;border-radius:10px;background:#fff"></div><svg style="position:absolute;left:734px;top:748px;overflow:visible;" width="56" height="56" viewBox="0 0 56 56"><rect x="1.8" y="5.9" width="52.3" height="43.7" fill="#fff" stroke="#000" stroke-width="2" rx="0" stroke-linejoin="round"/><rect x="15.1" y="5.9" width="13.1" height="11.0" fill="#a081ee" stroke="#000" stroke-width="2" rx="0" stroke-linejoin="round"/><rect x="28.2" y="5.9" width="13.0" height="11.0" fill="#a081ee" stroke="#000" stroke-width="2" rx="0" stroke-linejoin="round"/><rect x="41.2" y="5.9" width="12.9" height="11.0" fill="#a081ee" stroke="#000" stroke-width="2" rx="0" stroke-linejoin="round"/><rect x="1.8" y="16.9" width="13.3" height="10.9" fill="#a081ee" stroke="#000" stroke-width="2" rx="0" stroke-linejoin="round"/><rect x="1.8" y="27.8" width="13.3" height="11.0" fill="#a081ee" stroke="#000" stroke-width="2" rx="0" stroke-linejoin="round"/><rect x="1.8" y="38.8" width="13.3" height="10.8" fill="#a081ee" stroke="#000" stroke-width="2" rx="0" stroke-linejoin="round"/><rect x="1.8" y="5.9" width="13.3" height="11.0" fill="#fff" stroke="#000" stroke-width="2" rx="0" stroke-linejoin="round"/><path d="M25.0 38.2 L41.2 38.2 L41.2 25.9" fill="none" stroke="#000" stroke-width="2" stroke-linejoin="round" stroke-linecap="round" /><path d="M29.5 33.5 L25.0 38.2 L29.5 42.8" fill="none" stroke="#000" stroke-width="2" stroke-linejoin="round" stroke-linecap="round" /><path d="M36.5 30.5 L41.2 25.9 L45.8 30.5" fill="none" stroke="#000" stroke-width="2" stroke-linejoin="round" stroke-linecap="round" /></svg><div style="position:absolute;left:820px;top:738px;width:96px;height:72px;border:2px solid #bdbdbd;border-radius:10px;background:#fff"></div><svg style="position:absolute;left:842px;top:748px;overflow:visible;" width="56" height="56" viewBox="0 0 56 56"><rect x="1.6" y="5.9" width="52.9" height="43.7" fill="#fff" stroke="#000" stroke-width="2" rx="0" stroke-linejoin="round"/><rect x="1.6" y="5.9" width="52.9" height="11.0" fill="#a081ee" stroke="#000" stroke-width="2" rx="0" stroke-linejoin="round"/><path d="M15.3 5.9 L15.3 49.6" stroke="#000" stroke-width="2" stroke-linecap="butt" fill="none"/><path d="M28.2 5.9 L28.2 49.6" stroke="#000" stroke-width="2" stroke-linecap="butt" fill="none"/><path d="M41.2 5.9 L41.2 49.6" stroke="#000" stroke-width="2" stroke-linecap="butt" fill="none"/><path d="M1.6 27.8 L54.5 27.8" stroke="#000" stroke-width="2" stroke-linecap="butt" fill="none"/><path d="M1.6 38.8 L54.5 38.8" stroke="#000" stroke-width="2" stroke-linecap="butt" fill="none"/></svg><div style="position:absolute;left:496px;top:822px;width:96px;height:72px;border:2px solid #bdbdbd;border-radius:10px;background:#fff"></div><svg style="position:absolute;left:518px;top:832px;overflow:visible;" width="56" height="56" viewBox="0 0 56 56"><rect x="1.5" y="6.1" width="13.8" height="10.9" fill="#3d00d8" stroke="#000" stroke-width="2" rx="0" stroke-linejoin="round"/><rect x="15.3" y="6.1" width="12.8" height="10.9" fill="#e8e0fb" stroke="#000" stroke-width="2" rx="0" stroke-linejoin="round"/><rect x="28.1" y="6.1" width="12.9" height="10.9" fill="#ffad33" stroke="#000" stroke-width="2" rx="0" stroke-linejoin="round"/><rect x="41.0" y="6.1" width="13.3" height="10.9" fill="#ffad33" stroke="#000" stroke-width="2" rx="0" stroke-linejoin="round"/><rect x="1.5" y="17.0" width="13.8" height="11.0" fill="#e8e0fb" stroke="#000" stroke-width="2" rx="0" stroke-linejoin="round"/><rect x="15.3" y="17.0" width="12.8" height="11.0" fill="#fff0de" stroke="#000" stroke-width="2" rx="0" stroke-linejoin="round"/><rect x="28.1" y="17.0" width="12.9" height="11.0" fill="#a081ee" stroke="#000" stroke-width="2" rx="0" stroke-linejoin="round"/><rect x="41.0" y="17.0" width="13.3" height="11.0" fill="#3d00d8" stroke="#000" stroke-width="2" rx="0" stroke-linejoin="round"/><rect x="1.5" y="28.0" width="13.8" height="10.8" fill="#e8e0fb" stroke="#000" stroke-width="2" rx="0" stroke-linejoin="round"/><rect x="15.3" y="28.0" width="12.8" height="10.8" fill="#a081ee" stroke="#000" stroke-width="2" rx="0" stroke-linejoin="round"/><rect x="28.1" y="28.0" width="12.9" height="10.8" fill="#fff0de" stroke="#000" stroke-width="2" rx="0" stroke-linejoin="round"/><rect x="41.0" y="28.0" width="13.3" height="10.8" fill="#ffad33" stroke="#000" stroke-width="2" rx="0" stroke-linejoin="round"/><rect x="1.5" y="38.8" width="13.8" height="10.9" fill="#ffad33" stroke="#000" stroke-width="2" rx="0" stroke-linejoin="round"/><rect x="15.3" y="38.8" width="12.8" height="10.9" fill="#2e0a9c" stroke="#000" stroke-width="2" rx="0" stroke-linejoin="round"/><rect x="28.1" y="38.8" width="12.9" height="10.9" fill="#fff0de" stroke="#000" stroke-width="2" rx="0" stroke-linejoin="round"/><rect x="41.0" y="38.8" width="13.3" height="10.9" fill="#3d00d8" stroke="#000" stroke-width="2" rx="0" stroke-linejoin="round"/></svg><div style="position:absolute;left:604px;top:822px;width:96px;height:72px;border:2px solid #bdbdbd;border-radius:10px;background:#fff"></div><svg style="position:absolute;left:626px;top:832px;overflow:visible;" width="56" height="56" viewBox="0 0 56 56"><rect x="1.8" y="6.1" width="26.6" height="23.2" fill="#2e0a9c" stroke="#000" stroke-width="2" rx="0" stroke-linejoin="round"/><rect x="1.8" y="29.3" width="26.6" height="20.4" fill="#3d00d8" stroke="#000" stroke-width="2" rx="0" stroke-linejoin="round"/><rect x="28.4" y="6.1" width="26.1" height="14.3" fill="#a081ee" stroke="#000" stroke-width="2" rx="0" stroke-linejoin="round"/><rect x="28.4" y="20.4" width="12.8" height="29.3" fill="#e8e0fb" stroke="#000" stroke-width="2" rx="0" stroke-linejoin="round"/><rect x="41.2" y="20.4" width="13.3" height="18.1" fill="#fff0de" stroke="#000" stroke-width="2" rx="0" stroke-linejoin="round"/><rect x="41.2" y="38.5" width="13.3" height="11.2" fill="#ffad33" stroke="#000" stroke-width="2" rx="0" stroke-linejoin="round"/></svg><div style="position:absolute;left:712px;top:822px;width:96px;height:72px;border:2px solid #bdbdbd;border-radius:10px;background:#fff"></div><svg style="position:absolute;left:734px;top:832px;overflow:visible;" width="56" height="56" viewBox="0 0 56 56"><circle cx="20.3" cy="14.1" r="5.7" fill="#ffad33" stroke="#000" stroke-width="1.8"/><circle cx="40.2" cy="13.6" r="9.3" fill="#a081ee" stroke="#000" stroke-width="1.8"/><circle cx="14.6" cy="25.1" r="2.7" fill="#ffad33" stroke="#000" stroke-width="1.8"/><circle cx="27.9" cy="30.3" r="6.5" fill="#3d00d8" stroke="#000" stroke-width="1.8"/><circle cx="45.0" cy="31.8" r="5.7" fill="#a081ee" stroke="#000" stroke-width="1.8"/><circle cx="12.3" cy="36.4" r="4.2" fill="#3d00d8" stroke="#000" stroke-width="1.8"/><circle cx="36.0" cy="41.7" r="2.7" fill="#ffad33" stroke="#000" stroke-width="1.8"/><circle cx="22.2" cy="44.5" r="3.6" fill="#a081ee" stroke="#000" stroke-width="1.8"/><circle cx="9.2" cy="46.4" r="2.3" fill="#ffad33" stroke="#000" stroke-width="1.8"/><path d="M2.2 1.8 L2.2 54.0 L54.5 54.0" fill="none" stroke="#000" stroke-width="2" stroke-linejoin="round" stroke-linecap="round" /></svg><div style="position:absolute;left:820px;top:822px;width:96px;height:72px;border:2px solid #bdbdbd;border-radius:10px;background:#fff"></div><svg style="position:absolute;left:842px;top:832px;overflow:visible;" width="56" height="56" viewBox="0 0 56 56"><rect x="4.8" y="41.3" width="7.8" height="12.4" fill="#a081ee" stroke="#000" stroke-width="2" rx="0" stroke-linejoin="round"/><rect x="12.6" y="14.7" width="7.6" height="39.0" fill="#a081ee" stroke="#000" stroke-width="2" rx="0" stroke-linejoin="round"/><rect x="20.2" y="1.8" width="8.0" height="51.9" fill="#a081ee" stroke="#000" stroke-width="2" rx="0" stroke-linejoin="round"/><rect x="28.2" y="6.1" width="7.6" height="47.6" fill="#a081ee" stroke="#000" stroke-width="2" rx="0" stroke-linejoin="round"/><rect x="35.8" y="14.7" width="8.0" height="39.0" fill="#a081ee" stroke="#000" stroke-width="2" rx="0" stroke-linejoin="round"/><rect x="43.8" y="38.8" width="7.6" height="14.9" fill="#a081ee" stroke="#000" stroke-width="2" rx="0" stroke-linejoin="round"/><path d="M1.6 53.7 L54.5 53.7" stroke="#000" stroke-width="2" stroke-linecap="round" fill="none"/></svg><div style="position:absolute;left:496px;top:906px;width:96px;height:72px;border:2px solid #bdbdbd;border-radius:10px;background:#fff"></div><svg style="position:absolute;left:518px;top:916px;overflow:visible;" width="56" height="56" viewBox="0 0 56 56"><rect x="1.5" y="1.8" width="52.8" height="8.2" fill="#a081ee" stroke="#000" stroke-width="2" rx="0" stroke-linejoin="round"/><rect x="6.2" y="13.2" width="43.4" height="7.8" fill="#a081ee" stroke="#000" stroke-width="2" rx="0" stroke-linejoin="round"/><rect x="12.5" y="24.2" width="30.8" height="8.0" fill="#a081ee" stroke="#000" stroke-width="2" rx="0" stroke-linejoin="round"/><rect x="19.1" y="35.3" width="17.5" height="7.6" fill="#a081ee" stroke="#000" stroke-width="2" rx="0" stroke-linejoin="round"/><rect x="24.9" y="46.1" width="6.0" height="8.0" fill="#a081ee" stroke="#000" stroke-width="2" rx="0" stroke-linejoin="round"/></svg><div style="position:absolute;left:604px;top:906px;width:96px;height:72px;border:2px solid #bdbdbd;border-radius:10px;background:#fff"></div><svg style="position:absolute;left:626px;top:916px;overflow:visible;" width="56" height="56" viewBox="0 0 56 56"><path d="M11 1.8 C28 1.8 28 7.5 45.2 7.5" fill="none" stroke="#000" stroke-width="2"/><path d="M11 17.0 C28 17.0 28 20.8 45.2 20.8" fill="none" stroke="#000" stroke-width="2"/><path d="M11 17.0 C28 17.0 28 27.7 45.2 27.7" fill="none" stroke="#000" stroke-width="2"/><path d="M11 33.4 C28 33.4 28 45.1 45.2 45.1" fill="none" stroke="#000" stroke-width="2"/><path d="M11 43.2 C28 43.2 28 27.7 45.2 27.7" fill="none" stroke="#000" stroke-width="2"/><path d="M11 54.1 C28 54.1 28 45.1 45.2 45.1" fill="none" stroke="#000" stroke-width="2"/><rect x="1.8" y="1.8" width="9.2" height="31.6" fill="#a081ee" stroke="#000" stroke-width="2" rx="0" stroke-linejoin="round"/><rect x="1.8" y="43.2" width="9.2" height="10.9" fill="#3d00d8" stroke="#000" stroke-width="2" rx="0" stroke-linejoin="round"/><rect x="45.2" y="7.5" width="8.9" height="13.3" fill="#ffad33" stroke="#000" stroke-width="2" rx="0" stroke-linejoin="round"/><rect x="45.2" y="27.7" width="8.9" height="17.4" fill="#fff0de" stroke="#000" stroke-width="2" rx="0" stroke-linejoin="round"/></svg><div style="position:absolute;left:712px;top:906px;width:96px;height:72px;border:2px solid #bdbdbd;border-radius:10px;background:#fff"></div><svg style="position:absolute;left:734px;top:916px;overflow:visible;" width="56" height="56" viewBox="0 0 56 56"><defs><clipPath id="gcA"><circle cx="27.9" cy="27.7" r="25.5"/></clipPath></defs><circle cx="27.9" cy="27.7" r="25.5" fill="#e8e0fb" stroke="#000" stroke-width="2"/><g clip-path="url(#gcA)" stroke="#000" stroke-width="1.8" stroke-linejoin="round"><path d="M23.0 3.3 L23.8 7.3 L27.4 10.2 L26.2 13.8 L21.8 15.0 L19.8 17.8 L15.3 19.5 L14.5 21.9 L18.2 23.5 L19.0 26.7 L15.3 28.7 L10.9 26.7 L6.8 21.3 L5.8 15.8 L2.0 12.0 L2.0 6.0 L10.0 -1.0 L18.0 -2.0 Z" fill="#e8e0fb"/><path d="M29.5 2.9 L32.3 7.3 L33.9 9.4 L36.3 8.2 L38.4 5.7 L40.0 2.0 L34.0 -1.0 Z" fill="#e8e0fb"/><path d="M23.4 24.7 L27.0 24.3 L29.5 26.3 L28.7 28.3 L25.0 27.5 L23.0 26.3 Z" fill="#e8e0fb"/><path d="M17.8 32.0 L21.0 30.4 L25.0 31.6 L29.5 34.0 L34.7 33.2 L38.8 34.4 L38.4 37.6 L35.5 40.5 L34.3 44.1 L31.1 46.9 L29.5 50.1 L27.5 53.4 L26.0 57.0 L23.0 56.0 L23.4 52.6 L22.6 46.5 L21.0 40.0 L18.6 35.6 Z" fill="#e8e0fb"/><path d="M51.7 21.1 L46.8 21.1 L43.6 25.5 L44.4 30.4 L48.4 33.6 L50.5 34.0 L49.7 39.2 L51.3 39.2 L57.0 38.0 L57.0 21.0 Z" fill="#e8e0fb"/></g><circle cx="27.9" cy="27.7" r="25.5" fill="none" stroke="#000" stroke-width="2"/><circle cx="12.8" cy="9.4" r="5.4" fill="#a081ee" stroke="#000" stroke-width="2"/><circle cx="44.9" cy="15.0" r="7.9" fill="#3d00d8" stroke="#000" stroke-width="2"/><circle cx="18.2" cy="35.6" r="9.7" fill="#2e0a9c" stroke="#000" stroke-width="2"/></svg><div style="position:absolute;left:820px;top:906px;width:96px;height:72px;border:2px solid #bdbdbd;border-radius:10px;background:#fff"></div><svg style="position:absolute;left:842px;top:916px;overflow:visible;" width="56" height="56" viewBox="0 0 56 56"><defs><clipPath id="gcB"><circle cx="28" cy="27.7" r="25.5"/></clipPath></defs><circle cx="28.0" cy="27.7" r="25.5" fill="#e8e0fb" stroke="#000" stroke-width="2"/><g clip-path="url(#gcB)" stroke="#000" stroke-width="1.8" stroke-linejoin="round"><path d="M23.0 3.3 L23.8 7.3 L27.4 10.2 L26.2 13.8 L21.8 15.0 L19.8 17.8 L15.3 19.5 L14.5 21.9 L18.2 23.5 L19.0 26.7 L15.3 28.7 L10.9 26.7 L6.8 21.3 L5.8 15.8 L2.0 12.0 L2.0 6.0 L10.0 -1.0 L18.0 -2.0 Z" fill="#a081ee"/><path d="M29.5 2.9 L32.3 7.3 L33.9 9.4 L36.3 8.2 L38.4 5.7 L40.0 2.0 L34.0 -1.0 Z" fill="#a081ee"/><path d="M23.4 24.7 L27.0 24.3 L29.5 26.3 L28.7 28.3 L25.0 27.5 L23.0 26.3 Z" fill="#a081ee"/><path d="M17.8 32.0 L21.0 30.4 L25.0 31.6 L29.5 34.0 L34.7 33.2 L38.8 34.4 L38.4 37.6 L35.5 40.5 L34.3 44.1 L31.1 46.9 L29.5 50.1 L27.5 53.4 L26.0 57.0 L23.0 56.0 L23.4 52.6 L22.6 46.5 L21.0 40.0 L18.6 35.6 Z" fill="#2e0a9c"/><path d="M51.7 21.1 L46.8 21.1 L43.6 25.5 L44.4 30.4 L48.4 33.6 L50.5 34.0 L49.7 39.2 L51.3 39.2 L57.0 38.0 L57.0 21.0 Z" fill="#3d00d8"/></g><circle cx="28.0" cy="27.7" r="25.5" fill="none" stroke="#000" stroke-width="2"/></svg><div style="position:absolute;left:496px;top:990px;width:96px;height:72px;border:2px solid #bdbdbd;border-radius:10px;background:#fff"></div><svg style="position:absolute;left:518px;top:1000px;overflow:visible;" width="56" height="56" viewBox="0 0 56 56"><rect x="1.4" y="13.2" width="41.2" height="41.1" fill="#3d00d8" stroke="#000" stroke-width="2" rx="0" stroke-linejoin="round"/><defs><clipPath id="lmc"><rect x="13.1" y="1.3" width="41.4" height="41.2"/></clipPath></defs><rect x="13.1" y="1.3" width="41.4" height="41.2" fill="#e8e0fb" stroke="#000" stroke-width="2" rx="0" stroke-linejoin="round"/><g clip-path="url(#lmc)" stroke="#000" stroke-width="1.8" stroke-linejoin="round" fill="#7040e2"><path d="M12.0 0.0 L26.4 0.0 L26.4 2.9 L27.7 5.3 L30.5 7.4 L31.3 10.2 L29.7 13.0 L26.4 14.2 L25.2 16.2 L20.8 17.9 L22.8 21.1 L24.0 23.9 L21.6 25.1 L17.6 24.3 L14.7 21.9 L12.0 21.0 Z"/><path d="M34.5 0.0 L34.5 2.9 L36.1 5.7 L38.2 7.4 L40.6 9.0 L43.8 7.4 L45.4 4.5 L44.2 2.9 L44.2 0.0 Z"/><path d="M28.5 21.1 L30.5 20.3 L34.5 21.9 L36.1 23.9 L34.5 25.1 L30.5 23.9 Z"/><path d="M23.6 29.6 L26.4 26.7 L29.7 27.1 L33.7 30.0 L37.7 29.6 L42.2 31.2 L41.8 34.0 L39.8 36.0 L39.0 38.4 L37.3 41.3 L36.5 45.0 L27.7 45.0 L27.7 41.7 L27.3 36.8 L25.6 33.2 Z"/><path d="M57.0 15.0 L53.1 15.0 L48.2 17.0 L45.0 20.7 L45.4 25.5 L49.1 28.0 L49.5 33.6 L51.5 36.8 L53.5 37.6 L57.0 38.0 Z"/></g><rect x="13.1" y="1.3" width="41.4" height="41.2" fill="none" stroke="#000" stroke-width="2" rx="0" stroke-linejoin="round"/></svg><div style="position:absolute;left:604px;top:990px;width:96px;height:72px;border:2px solid #bdbdbd;border-radius:10px;background:#fff"></div><svg style="position:absolute;left:626px;top:1000px;overflow:visible;" width="56" height="56" viewBox="0 0 56 56"><path d="M28.0 1.7 L50.7 14.8 L50.7 41.0 L28.0 54.1 L5.3 41.0 L5.3 14.8 Z" fill="#fff" stroke="#000" stroke-width="1.7" stroke-linejoin="round" stroke-linecap="round" /><path d="M28.0 3.2 L45.6 17.4 L50.6 41.0 L28.0 47.0 L10.5 38.4 L9.0 17.0 Z" fill="#e8e0fb" stroke="#000" stroke-width="1.6" stroke-linejoin="round" stroke-linecap="round" /><path d="M28.0 13.0 L40.4 20.3 L43.5 29.0 L39.5 37.0 L28.0 40.5 L17.8 35.6 L15.4 21.5 Z" fill="#a081ee" stroke="#000" stroke-width="1.6" stroke-linejoin="round" stroke-linecap="round" /><path d="M28.0 27.9 L28.0 1.7" stroke="#000" stroke-width="1.6" stroke-linecap="round" fill="none"/><path d="M28.0 27.9 L50.7 14.8" stroke="#000" stroke-width="1.6" stroke-linecap="round" fill="none"/><path d="M28.0 27.9 L50.7 41.0" stroke="#000" stroke-width="1.6" stroke-linecap="round" fill="none"/><path d="M28.0 27.9 L28.0 54.1" stroke="#000" stroke-width="1.6" stroke-linecap="round" fill="none"/><path d="M28.0 27.9 L5.3 41.0" stroke="#000" stroke-width="1.6" stroke-linecap="round" fill="none"/><path d="M28.0 27.9 L5.3 14.8" stroke="#000" stroke-width="1.6" stroke-linecap="round" fill="none"/><path d="M28.0 1.7 L50.7 14.8 L50.7 41.0 L28.0 54.1 L5.3 41.0 L5.3 14.8 Z" fill="none" stroke="#000" stroke-width="1.7" stroke-linejoin="round" stroke-linecap="round" /></svg><div style="position:absolute;left:712px;top:990px;width:96px;height:72px;border:2px solid #bdbdbd;border-radius:10px;background:#fff"></div><svg style="position:absolute;left:734px;top:1000px;overflow:visible;" width="56" height="56" viewBox="0 0 56 56"><path d="M20 38.6 C20 31.5 12.4 28 12.4 16.9 A15.65 15.65 0 0 1 43.7 16.9 C43.7 28 36.3 31.5 36.3 38.6 Z" fill="#e8e0fb" stroke="#000" stroke-width="2" stroke-linejoin="round"/><path d="M20 38.6 H36.3 V46 Q36.3 49.6 32.5 49.6 H23.8 Q20 49.6 20 46 Z" fill="#a081ee" stroke="#000" stroke-width="2" stroke-linejoin="round"/><path d="M20.0 43.5 L36.3 43.5" stroke="#000" stroke-width="1.8" stroke-linecap="butt" fill="none"/><path d="M24.4 49.6 H31.7 C31.7 55.4 24.4 55.4 24.4 49.6 Z" fill="#3d00d8" stroke="#000" stroke-width="1.8"/><path d="M4.6 30.8 L22.0 15.7 L31.3 25.9 L51.3 7.4" fill="none" stroke="#000" stroke-width="1.8" stroke-linejoin="round" stroke-linecap="round" /><circle cx="4.6" cy="30.8" r="2.3" fill="#000"/><circle cx="22.0" cy="15.7" r="2.3" fill="#000"/><circle cx="31.3" cy="25.9" r="2.3" fill="#000"/><circle cx="51.3" cy="7.4" r="2.3" fill="#000"/></svg><div style="position:absolute;left:820px;top:990px;width:96px;height:72px;border:2px solid #bdbdbd;border-radius:10px;background:#fff"></div><svg style="position:absolute;left:842px;top:1000px;overflow:visible;" width="56" height="56" viewBox="0 0 56 56"><path d="M8.9 44.9 C2 44.9 1.2 38 1.2 35.5 C1.2 30 5 27 9.5 26.3 C9.5 17 15 11.2 22 11.2 C28 11.2 32 14.5 34.3 20.5 C36 18.5 38 18.3 39.6 18.3 C43 18.3 45.5 21.5 45.3 26.3 C51 27.5 54.9 30.5 54.9 35.5 C54.9 41 51 44.9 46 44.9 Z" fill="#e8e0fb" stroke="#000" stroke-width="2" stroke-linejoin="round"/><path d="M15.8 27.0 L25.0 27.0" stroke="#000" stroke-width="1.8" stroke-linecap="round" fill="none"/><path d="M30.0 27.0 L35.5 27.0" stroke="#000" stroke-width="1.8" stroke-linecap="round" fill="none"/><path d="M16.6 32.1 L23.0 32.1" stroke="#000" stroke-width="1.8" stroke-linecap="round" fill="none"/><path d="M27.5 32.1 L39.2 32.1" stroke="#000" stroke-width="1.8" stroke-linecap="round" fill="none"/><path d="M13.0 37.2 L22.2 37.2" stroke="#000" stroke-width="1.8" stroke-linecap="round" fill="none"/><path d="M25.0 37.2 L34.0 37.2" stroke="#000" stroke-width="1.8" stroke-linecap="round" fill="none"/><path d="M37.5 37.2 L41.2 37.2" stroke="#000" stroke-width="1.8" stroke-linecap="round" fill="none"/></svg><div style="position:absolute;left:496px;top:1074px;width:96px;height:72px;border:2px solid #bdbdbd;border-radius:10px;background:#fff"></div><svg style="position:absolute;left:518px;top:1084px;overflow:visible;" width="56" height="56" viewBox="0 0 56 56"><rect x="2.4" y="7.1" width="51.1" height="41.6" fill="#fff" stroke="#000" stroke-width="2" rx="1.2" stroke-linejoin="round"/><rect x="2.4" y="7.1" width="51.1" height="6.3" fill="#a081ee" stroke="#000" stroke-width="2" rx="1.2" stroke-linejoin="round"/><circle cx="28.1" cy="31.3" r="13.6" fill="#e8e0fb" stroke="#000" stroke-width="2"/><circle cx="5.9" cy="10" r="1.1" fill="#000"/><circle cx="9.7" cy="10" r="1.1" fill="#000"/><circle cx="13.5" cy="10" r="1.1" fill="#000"/><path d="M25.6 28.2 H23.75 A3.15 3.15 0 0 0 23.75 34.5 H25.6 M30.6 28.2 H33.15 A3.15 3.15 0 0 1 33.15 34.5 H30.6 M25.3 31.3 H31.2" fill="none" stroke="#000" stroke-width="2.1" stroke-linecap="round"/></svg><div style="position:absolute;left:604px;top:1074px;width:96px;height:72px;border:2px solid #bdbdbd;border-radius:10px;background:#fff"></div><svg style="position:absolute;left:626px;top:1084px;overflow:visible;" width="56" height="56" viewBox="0 0 56 56"><path d="M12.5 1.8 C7.3 1.8 7.3 6 7.3 12 V22 C7.3 27 5.5 29.6 1.8 29.6 C5.5 29.6 7.3 32 7.3 37 V44 C7.3 50 7.3 54.2 12.5 54.2" fill="none" stroke="#000" stroke-width="2.2" stroke-linecap="round" stroke-linejoin="round"/><path d="M43.6 1.8 C48.9 1.8 48.9 6 48.9 12 V22 C48.9 27 50.7 29.6 54.4 29.6 C50.7 29.6 48.9 32 48.9 37 V44 C48.9 50 48.9 54.2 43.6 54.2" fill="none" stroke="#000" stroke-width="2.2" stroke-linecap="round" stroke-linejoin="round"/><rect x="14.5" y="14.6" width="8.5" height="17.4" fill="#ffad33" stroke="#000" stroke-width="2" rx="0" stroke-linejoin="round"/><rect x="23.0" y="4.9" width="9.1" height="27.1" fill="#a081ee" stroke="#000" stroke-width="2" rx="0" stroke-linejoin="round"/><rect x="32.1" y="10.6" width="8.7" height="21.4" fill="#3d00d8" stroke="#000" stroke-width="2" rx="0" stroke-linejoin="round"/><path d="M11.3 32.0 L43.6 32.0" stroke="#000" stroke-width="2" stroke-linecap="round" fill="none"/><circle cx="15.3" cy="37.6" r="1" fill="#000"/><circle cx="15.3" cy="42.9" r="1" fill="#000"/><circle cx="15.3" cy="48.1" r="1" fill="#000"/><path d="M19.0 37.6 L33.1 37.6" stroke="#000" stroke-width="1.8" stroke-linecap="butt" fill="none"/><path d="M19.0 42.9 L27.4 42.9" stroke="#000" stroke-width="1.8" stroke-linecap="butt" fill="none"/><path d="M29.5 42.9 L38.8 42.9" stroke="#000" stroke-width="1.8" stroke-linecap="butt" fill="none"/><path d="M19.0 48.1 L24.6 48.1" stroke="#000" stroke-width="1.8" stroke-linecap="butt" fill="none"/><path d="M27.0 48.1 L41.2 48.1" stroke="#000" stroke-width="1.8" stroke-linecap="butt" fill="none"/></svg><div style="position:absolute;left:472px;top:1166px;width:472px;height:2px;background:#dedede"></div><span class="t" style="left:497.0px;top:1200.1px;font-size:18px;font-weight:normal;color:#555;letter-spacing:1.52px;-webkit-text-stroke:0.35px #555;">ADD DATA</span><svg style="position:absolute;left:494px;top:1238px;overflow:visible;" width="430" height="52" viewBox="0 0 430 52"><defs><linearGradient id="dg" x1="0" x2="1" y1="0" y2="0"><stop offset="0" stop-color="#1b7fc0"/><stop offset="0.5" stop-color="#6f806c"/><stop offset="1" stop-color="#d87c10"/></linearGradient><linearGradient id="dbg" x1="0" x2="1" y1="0" y2="0"><stop offset="0" stop-color="#eaf4fc"/><stop offset="0.5" stop-color="#f6f8f9"/><stop offset="0.88" stop-color="#fdf7f0"/><stop offset="1" stop-color="#fff0df"/></linearGradient></defs><rect x="6.6" y="6.2" width="415" height="39.6" rx="19.8" fill="url(#dbg)"/><rect x="4.6" y="4.2" width="419" height="43.6" rx="21.8" fill="none" stroke="url(#dg)" stroke-width="4" stroke-dasharray="4 8.01"/></svg><span class="t" style="left:517.0px;top:1252.6px;font-size:24px;font-weight:normal;color:#777;letter-spacing:0.35px;-webkit-text-stroke:0.3px #777;">Add a dimension or measure</span><svg style="position:absolute;left:34px;top:160px;overflow:visible;" width="40" height="32" viewBox="0 0 40 32"><g fill="none" stroke="#cdcdcd" stroke-width="3.2" stroke-linecap="round" stroke-linejoin="round"><path d="M4.8 10.2 V21.4 H15.2"/><path d="M5.5 20.8 C12 9, 28 7.5, 35.5 21.2"/></g></svg><svg style="position:absolute;left:98px;top:160px;overflow:visible;" width="40" height="32" viewBox="0 0 40 32"><g fill="none" stroke="#cdcdcd" stroke-width="3.2" stroke-linecap="round" stroke-linejoin="round" transform="translate(40,0) scale(-1,1)"><path d="M4.8 10.2 V21.4 H15.2"/><path d="M5.5 20.8 C12 9, 28 7.5, 35.5 21.2"/></g></svg><div style="position:absolute;left:158px;top:152px;width:2px;height:48px;background:#6a6a6a"></div><div style="position:absolute;left:174px;top:148px;width:56px;height:56px;background:#3f3f3f;border-radius:8px"></div><div style="position:absolute;left:238px;top:148px;width:56px;height:56px;background:#3f3f3f;border-radius:8px"></div><svg style="position:absolute;left:182px;top:156px;overflow:visible;" width="40" height="40" viewBox="0 0 40 40"><g fill="none" stroke="#fff" stroke-width="3.2" stroke-linecap="round"><ellipse cx="20" cy="10.2" rx="13.5" ry="5.6"/><path d="M6.5 10.2 V30.2 C6.5 37.6 33.5 37.6 33.5 30.2 V10.2"/><path d="M6.5 20.2 C6.5 27.6 33.5 27.6 33.5 20.2"/></g></svg><svg style="position:absolute;left:246px;top:156px;overflow:visible;" width="40" height="40" viewBox="0 0 40 40"><g fill="none" stroke="#fff" stroke-width="3" stroke-linejoin="round"><rect x="4.3" y="11" width="7.3" height="24.8" rx="1"/><rect x="16.3" y="4.8" width="7.3" height="31" rx="1"/><rect x="28.3" y="20.1" width="7.3" height="15.7" rx="1"/></g></svg><svg style="position:absolute;left:310px;top:156px;overflow:visible;" width="40" height="40" viewBox="0 0 40 40"><path d="M6.8 4.8 H33.4 L23.2 19.5 V35 L16.8 30.4 V19.5 Z" fill="none" stroke="#5a5a5a" stroke-width="3.2" stroke-linejoin="round"/></svg><svg style="position:absolute;left:374px;top:156px;overflow:visible;" width="40" height="40" viewBox="0 0 40 40"><g fill="none" stroke="#5a5a5a" stroke-width="3" stroke-linecap="round"><path d="M9 7.5 V18.2 M4.8 22.7 H13.2 M9 22.7 V32.6"/><path d="M19.9 7.5 V14.3 M15.7 14.3 H24.1 M19.9 19.6 V32.6"/><path d="M31 7.5 V20.6 M26.8 25.4 H35.2 M31 25.4 V32.6"/></g></svg><svg style="position:absolute;left:438px;top:156px;overflow:visible;" width="40" height="40" viewBox="0 0 40 40"><g fill="none" stroke="#5a5a5a" stroke-width="3.1" stroke-linecap="round" stroke-linejoin="round"><path d="M15.2 29 L10.6 19.3 A10.3 10.3 0 1 1 29 19.3 L24.4 29 Z"/><path d="M16.6 34.6 H23.4"/><path d="M20.7 9.6 L24.9 14.7" stroke-width="2.8"/></g></svg><svg style="position:absolute;left:502px;top:156px;overflow:visible;" width="40" height="40" viewBox="0 0 40 40"><g fill="#5a5a5a" stroke="none"><rect x="13" y="28.1" width="6.8" height="8.4" rx="1.6"/><rect x="21.8" y="21.8" width="6.4" height="14.7" rx="1.6"/><rect x="30.1" y="13" width="6.6" height="23.5" rx="1.6"/></g><path d="M4.9 29.2 L7.7 21.6 L24.2 5 L29.2 10 L12.7 26.5 Z M21 8.2 L26 13.2" fill="none" stroke="#5a5a5a" stroke-width="2.6" stroke-linejoin="round"/></svg><div style="position:absolute;left:562px;top:152px;width:2px;height:48px;background:#6a6a6a"></div><span class="t" style="left:586.5px;top:168.1px;font-size:18px;font-weight:normal;color:#555;letter-spacing:1.49px;-webkit-text-stroke:0.35px #555;">ADD:</span><svg style="position:absolute;left:653px;top:156px;overflow:visible;" width="40" height="40" viewBox="0 0 40 40"><path d="M6.3 25.2 L16.8 14.4 L24.5 23.1 L34 13.2" fill="none" stroke="#5a5a5a" stroke-width="3" stroke-linejoin="round"/><circle cx="6.3" cy="25.2" r="2.9" fill="#5a5a5a"/><circle cx="16.8" cy="14.4" r="2.9" fill="#5a5a5a"/><circle cx="24.5" cy="23.1" r="2.9" fill="#5a5a5a"/><circle cx="34" cy="13.2" r="2.9" fill="#5a5a5a"/></svg><svg style="position:absolute;left:717px;top:156px;overflow:visible;" width="40" height="40" viewBox="0 0 40 40"><path d="M6.7 12.3 V7.2 H33.3 V12.3 M20.1 7.2 V33.7 M14.5 33.7 H26" fill="none" stroke="#5a5a5a" stroke-width="3.1" stroke-linecap="round" stroke-linejoin="round"/></svg><svg style="position:absolute;left:781px;top:156px;overflow:visible;" width="40" height="40" viewBox="0 0 40 40"><g fill="none" stroke="#5a5a5a" stroke-width="3.2" stroke-linejoin="round"><rect x="4.8" y="5" width="30.2" height="30.2" rx="5"/><circle cx="14.9" cy="14.7" r="3.7" stroke-width="2.8"/><path d="M7.5 33.5 L26.7 16.6 L35 24.6"/></g></svg><svg style="position:absolute;left:845px;top:156px;overflow:visible;" width="40" height="40" viewBox="0 0 40 40"><g fill="none" stroke="#5a5a5a" stroke-linejoin="round" stroke-linecap="round"><path d="M18 35.2 H3.8 V6.6 H36.3 V22" stroke-width="3.1"/><path d="M3.8 6.2 H36.3" stroke-width="4"/><path d="M25.2 30.3 H39.5 M31 24.4 L25 30.3 L31 36.2" stroke-width="2.6"/></g><rect x="10.3" y="16.9" width="5.2" height="12.7" fill="#5a5a5a"/><rect x="17.4" y="12.3" width="5.6" height="17.3" fill="#5a5a5a"/><path d="M25 22.5 L29.5 22.5 L25 27 Z" fill="#5a5a5a"/></svg><svg style="position:absolute;left:909px;top:156px;overflow:visible;" width="40" height="40" viewBox="0 0 40 40"><g fill="none" stroke="#5a5a5a" stroke-width="2.8" stroke-linejoin="round" stroke-linecap="round"><rect x="4.7" y="6.8" width="30.5" height="26.4" rx="1"/><path d="M4.7 10.8 H35.2" stroke-width="2.2"/><path d="M18 18.2 H15.75 A3.35 3.35 0 0 0 15.75 24.9 H18 M23.2 18.2 H25.45 A3.35 3.35 0 0 1 25.45 24.9 H23.2 M16.9 21.55 H24.3" stroke-width="2.5"/></g></svg><div style="position:absolute;left:0px;top:212px;width:2636px;height:2px;background:#dedede"></div><span class="t" style="left:34.8px;top:89.3px;font-size:23.5px;font-weight:normal;color:#111;letter-spacing:0.58px;-webkit-text-stroke:0.5px #111;">File</span><span class="t" style="left:116.6px;top:89.3px;font-size:23.5px;font-weight:normal;color:#111;letter-spacing:1.03px;-webkit-text-stroke:0.5px #111;">Edit</span><span class="t" style="left:202.1px;top:89.3px;font-size:23.5px;font-weight:normal;color:#111;letter-spacing:0.69px;-webkit-text-stroke:0.5px #111;">Data</span><span class="t" style="left:296.5px;top:89.3px;font-size:23.5px;font-weight:normal;color:#111;letter-spacing:1.34px;-webkit-text-stroke:0.5px #111;">Insert</span><span class="t" style="left:403.7px;top:89.3px;font-size:23.5px;font-weight:normal;color:#111;letter-spacing:0.53px;-webkit-text-stroke:0.5px #111;">Sheets</span><span class="t" style="left:521.4px;top:89.3px;font-size:23.5px;font-weight:normal;color:#111;letter-spacing:1.12px;-webkit-text-stroke:0.5px #111;">Objects</span><span class="t" style="left:649.7px;top:89.3px;font-size:23.5px;font-weight:normal;color:#111;letter-spacing:0.17px;-webkit-text-stroke:0.5px #111;">Search</span><span class="t" style="left:2115.5px;top:90.0px;font-size:20.5px;font-weight:normal;color:#000;letter-spacing:1.44px;-webkit-text-stroke:0.5px #000;">Actual size</span><svg style="position:absolute;left:2248px;top:93px;overflow:visible;" width="22" height="14" viewBox="0 0 22 14"><path d="M1.6 2.2 L20.6 2.2 L11.1 12.2 Z" fill="#000" stroke="#000" stroke-width="1.6" stroke-linejoin="round"/></svg><div style="position:absolute;left:2291px;top:77px;width:205px;height:42px;border:2px solid #3b00d9;border-radius:7.5px"></div><svg style="position:absolute;left:2310px;top:89px;overflow:visible;" width="22" height="22" viewBox="0 0 22 22"><path d="M11 1.6 Q12.4 9.4 20.2 10.8 Q12.4 12.2 11 20 Q9.6 12.2 1.8 10.8 Q9.6 9.4 11 1.6 Z" fill="none" stroke="#3b00d9" stroke-width="2" stroke-linejoin="round"/><path d="M3.8 2.2 L5.6 4.2 L3.8 6.2 L2 4.2 Z" fill="#3b00d9"/></svg><span class="t" style="left:2342.0px;top:90.0px;font-size:20.5px;font-weight:normal;color:#3b00d9;letter-spacing:1.77px;-webkit-text-stroke:0.6px #3b00d9;">Manage Q&amp;A</span><div style="position:absolute;left:2508px;top:77px;width:126px;height:42px;border:2px solid #000;border-radius:7.5px"></div><span class="t" style="left:2533.5px;top:90.0px;font-size:20.5px;font-weight:normal;color:#000;letter-spacing:1.54px;-webkit-text-stroke:0.6px #000;">Publish</span><div style="position:absolute;left:0px;top:0px;width:2636px;height:60px;background:#232323"></div><div style="position:absolute;left:26px;top:6px;width:141px;height:44px;border-radius:22px;background:linear-gradient(90deg,#8a5cff 0%,#b23fd8 35%,#f034c4 62%,#ff5a7e 82%,#ff7a3a 100%)"></div><div style="position:absolute;left:28px;top:8px;width:137px;height:40px;border-radius:20px;background:#232323"></div><div style="position:absolute;left:45.5px;top:21.2px;width:17px;height:1.8px;background:#fff"></div><div style="position:absolute;left:45.5px;top:27.4px;width:17px;height:1.8px;background:#fff"></div><div style="position:absolute;left:45.5px;top:33.6px;width:17px;height:1.8px;background:#fff"></div><span class="t" style="left:72.8px;top:17.6px;font-size:21px;font-weight:normal;color:#fff;letter-spacing:0.67px;-webkit-text-stroke:1.1px #fff;">Explore</span><svg style="position:absolute;left:187px;top:6px;overflow:visible;" width="44" height="44" viewBox="0 0 44 44"><g fill="none" stroke="#fff" stroke-width="3.4" stroke-linejoin="round" stroke-linecap="round"><path d="M22 2.7 L38.5 12.2 V31.3 L22 40.8 L5.4 31.3 V12.2 Z"/><path d="M5.4 25.8 L22.2 16.4 V27.3 L38.5 17.9" stroke-linejoin="miter"/></g></svg><span class="t" style="left:243.5px;top:13.5px;font-size:28px;font-weight:normal;color:#fff;letter-spacing:0.43px;">Amazon Quick Suite</span><div style="position:absolute;left:521px;top:8px;width:2px;height:40px;background:#5c5c5c"></div><span class="t" style="left:547.5px;top:17.7px;font-size:22.8px;font-weight:normal;color:#fff;letter-spacing:0.50px;-webkit-text-stroke:0.5px #fff;">Analyses</span><div style="position:absolute;left:547px;top:38.6px;width:97px;height:2px;background:#fff"></div><svg style="position:absolute;left:670px;top:14px;overflow:visible;" width="20" height="28" viewBox="0 0 20 28"><path d="M3 2 L16 14 L3 26" fill="none" stroke="#8f8f8f" stroke-width="2.4" stroke-linecap="round" stroke-linejoin="round"/></svg><svg style="position:absolute;left:722px;top:14px;overflow:visible;" width="28" height="28" viewBox="0 0 28 28"><path d="M13.9 3.0 L17.4 11.0 L26.1 11.8 L19.5 17.6 L21.4 26.2 L13.9 21.7 L6.4 26.2 L8.3 17.6 L1.7 11.8 L10.4 11.0 Z" fill="none" stroke="#a8a8a8" stroke-width="2.5" stroke-linejoin="round" stroke-linecap="round" /></svg><span class="t" style="left:760.5px;top:16.7px;font-size:24px;font-weight:normal;color:#fff;letter-spacing:0.28px;-webkit-text-stroke:0.6px #fff;">customer analysis</span><div style="position:absolute;left:756px;top:48px;width:608px;height:2px;background:#161616"></div><svg style="position:absolute;left:2434px;top:6px;overflow:visible;" width="42" height="44" viewBox="0 0 42 44"><defs><linearGradient id="qg" x1="0.85" y1="0.1" x2="0.2" y2="0.95"><stop offset="0" stop-color="#0a9cff"/><stop offset="0.45" stop-color="#4668fa"/><stop offset="0.8" stop-color="#8433ff"/><stop offset="1" stop-color="#5a1fc4"/></linearGradient></defs><path d="M21 5.6 L35 13.7 V29.9 L21 38 L7 29.9 V13.7 Z" fill="url(#qg)" stroke="url(#qg)" stroke-width="5" stroke-linejoin="round"/><path d="M21 10.6 L30.9 16.2 V27.4 L21 33 L11.1 27.4 V16.2 Z" fill="none" stroke="#fff" stroke-width="2.3" stroke-linejoin="round"/><circle cx="20.5" cy="21.7" r="2.3" fill="#fff"/><path d="M20.5 21.7 L30 27.6" stroke="#fff" stroke-width="2.2"/></svg><div style="position:absolute;left:2496px;top:4px;width:2px;height:48px;background:#5c5c5c"></div><svg style="position:absolute;left:2534px;top:12px;overflow:visible;" width="32" height="32" viewBox="0 0 32 32"><circle cx="16" cy="16.1" r="12" fill="none" stroke="#b4b4b4" stroke-width="2.6"/><path d="M11.8 12.8 C11.8 8 20.2 8 20.2 12.8 C20.2 16 16 15.8 16 18.8" fill="none" stroke="#b4b4b4" stroke-width="2.3" stroke-linecap="round"/><circle cx="16" cy="22.2" r="1.4" fill="#b4b4b4"/></svg><svg style="position:absolute;left:2590px;top:12px;overflow:visible;" width="32" height="32" viewBox="0 0 32 32"><circle cx="15.9" cy="10.6" r="4.9" fill="none" stroke="#b4b4b4" stroke-width="2.5"/><path d="M8 26.5 V24.3 A4.3 4.3 0 0 1 12.3 20 H19.7 A4.3 4.3 0 0 1 24 24.3 V26.5" fill="none" stroke="#b4b4b4" stroke-width="2.5" stroke-linecap="round"/></svg></body></html>
